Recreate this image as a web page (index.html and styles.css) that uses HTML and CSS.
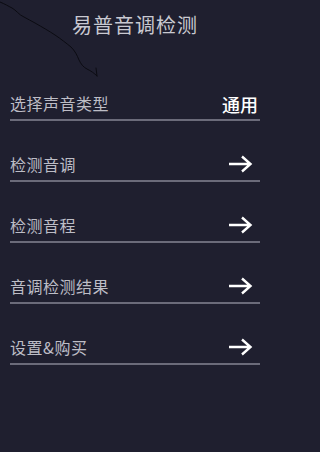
FILE: index.html
```html
<!DOCTYPE html>
<html lang="zh-CN">
<head>
<meta charset="utf-8">
<title>易普音调检测</title>
<link rel="stylesheet" href="styles.css">
</head>
<body>
<div class="screen">
  <svg class="scribble" width="110" height="85" viewBox="0 0 110 85" aria-hidden="true">
    <path d="M0 2 C5 4 8 6 12 8 S19 15 24 17 C28 19 31 21 35 23 C42 27 49 31 55 35 C61 39 66 43 71 47 C75 51 77 55 79 60 C81 64 83 67 87 69 C91 71 94 73 97 76 M96 68 L97 76" fill="none" stroke="#0b0b12" stroke-width="1" stroke-linecap="round"/>
  </svg>
  <header class="header">
    <h1 class="title">易普音调检测</h1>
  </header>
  <ul class="menu">
    <li class="row">
      <span class="label">选择声音类型</span>
      <span class="value">通用</span>
    </li>
    <li class="row">
      <span class="label">检测音调</span>
      <svg class="arrow" width="25" height="18" viewBox="0 0 25 18"><path d="M1 9 H23 M14 1.5 L22.5 9 L14 16.5" fill="none" stroke="#ffffff" stroke-width="2.4" stroke-linejoin="miter" stroke-linecap="butt"/></svg>
    </li>
    <li class="row">
      <span class="label">检测音程</span>
      <svg class="arrow" width="25" height="18" viewBox="0 0 25 18"><path d="M1 9 H23 M14 1.5 L22.5 9 L14 16.5" fill="none" stroke="#ffffff" stroke-width="2.4" stroke-linejoin="miter" stroke-linecap="butt"/></svg>
    </li>
    <li class="row">
      <span class="label">音调检测结果</span>
      <svg class="arrow" width="25" height="18" viewBox="0 0 25 18"><path d="M1 9 H23 M14 1.5 L22.5 9 L14 16.5" fill="none" stroke="#ffffff" stroke-width="2.4" stroke-linejoin="miter" stroke-linecap="butt"/></svg>
    </li>
    <li class="row">
      <span class="label">设置&amp;购买</span>
      <svg class="arrow" width="25" height="18" viewBox="0 0 25 18"><path d="M1 9 H23 M14 1.5 L22.5 9 L14 16.5" fill="none" stroke="#ffffff" stroke-width="2.4" stroke-linejoin="miter" stroke-linecap="butt"/></svg>
    </li>
  </ul>
</div>
</body>
</html>
```

FILE: styles.css
```css
html, body {
  margin: 0;
  padding: 0;
  background: #1f1f2f;
}

body {
  font-family: "Noto Sans CJK SC", "Noto Sans", sans-serif;
  width: 270px;
  height: 452px;
  overflow: hidden;
}

.screen {
  position: relative;
  width: 270px;
  height: 452px;
  background: #1f1f2f;
}

.scribble {
  position: absolute;
  left: 0;
  top: 0;
  pointer-events: none;
}

.header {
  height: 60px;
  box-sizing: border-box;
  padding-top: 15px;
}

.title {
  margin: 0;
  text-align: center;
  font-size: 20px;
  line-height: 20px;
  font-weight: 400;
  letter-spacing: 1px;
  color: #c9c9d1;
}

.menu {
  list-style: none;
  margin: 0 10px;
  padding: 0;
}

.row {
  height: 59px;
  border-bottom: 2px solid #6b6b7a;
  display: flex;
  align-items: flex-end;
  justify-content: space-between;
  box-sizing: content-box;
}

.label,
.value,
.arrow {
  margin-bottom: 6px;
}

.label {
  font-size: 16px;
  line-height: 20px;
  letter-spacing: 0.5px;
  color: #bdbdc6;
}

.value {
  font-size: 18px;
  line-height: 20px;
  font-weight: 500;
  color: #ffffff;
  margin-right: 2px;
  margin-bottom: 5px;
}

.arrow {
  display: block;
  margin-right: 7px;
  margin-bottom: 7px;
}
```
